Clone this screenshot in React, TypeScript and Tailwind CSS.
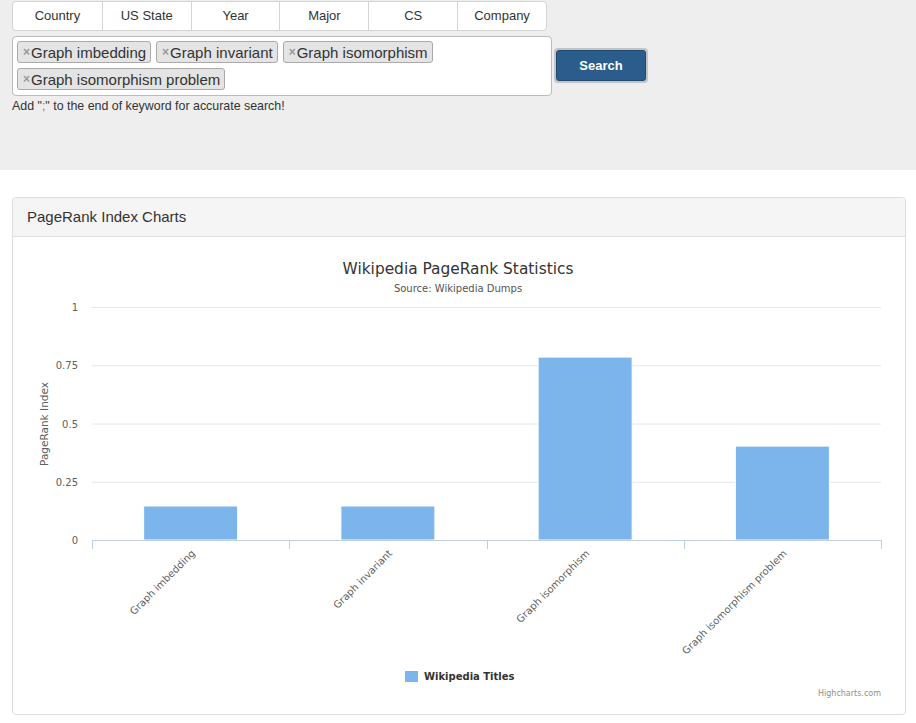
const tabs = ["Country", "US State", "Year", "Major", "CS", "Company"];
const tags = ["Graph imbedding", "Graph invariant", "Graph isomorphism", "Graph isomorphism problem"];

const bars = [
  { label: "Graph imbedding", value: 0.146 },
  { label: "Graph invariant", value: 0.146 },
  { label: "Graph isomorphism", value: 0.785 },
  { label: "Graph isomorphism problem", value: 0.403 },
];

const plotLeft = 79;
const plotRight = 868;
const plotTop = 70;
const plotBottom = 303;
const chartFont = "'DejaVu Sans', Verdana, sans-serif";

function Chart() {
  const plotH = plotBottom - plotTop;
  const catW = (plotRight - plotLeft) / bars.length;
  const ticks = [1, 0.75, 0.5, 0.25, 0];

  return (
    <svg width="891" height="477" className="block" style={{ fontFamily: chartFont }}>
      <text x="445" y="37" textAnchor="middle" fontSize="15.4" fill="#333">
        Wikipedia PageRank Statistics
      </text>
      <text x="445" y="55" textAnchor="middle" fontSize="10" fill="#555">
        Source: Wikipedia Dumps
      </text>

      {ticks.map((t) => {
        const y = plotBottom - t * plotH;
        return (
          <g key={t}>
            {t !== 0 && <line x1={plotLeft} x2={plotRight} y1={y + 0.5} y2={y + 0.5} stroke="#e6e6e6" />}
            <text x="65" y={y + 4} textAnchor="end" fontSize="10" fill="#606060">
              {t}
            </text>
          </g>
        );
      })}

      <text
        x="35"
        y="187"
        textAnchor="middle"
        fontSize="10.5"
        fill="#606060"
        transform="rotate(-90 35 187)"
      >
        PageRank Index
      </text>

      {bars.map((b, i) => {
        const h = b.value * plotH;
        const x = plotLeft + i * catW + (catW - 94) / 2;
        return (
          <rect key={b.label} x={x} y={plotBottom - h} width="94" height={h} fill="#7cb5ec" stroke="#fff" strokeWidth="1" />
        );
      })}

      <line x1={plotLeft} x2={plotRight} y1={plotBottom + 0.5} y2={plotBottom + 0.5} stroke="#c0d0e0" />
      {[0, 1, 2, 3, 4].map((i) => {
        const x = Math.round(plotLeft + i * catW) + 0.5;
        return <line key={i} x1={x} x2={x} y1={plotBottom} y2={plotBottom + 9} stroke="#c0d0e0" />;
      })}

      {bars.map((b, i) => {
        const cx = plotLeft + i * catW + catW / 2 + 5;
        const cy = 317;
        return (
          <text
            key={b.label}
            x={cx}
            y={cy}
            textAnchor="end"
            fontSize="10"
            fill="#606060"
            transform={`rotate(-45 ${cx} ${cy})`}
          >
            {b.label}
          </text>
        );
      })}

      <rect x="392" y="434" width="13" height="11" fill="#7cb5ec" />
      <text x="411" y="443" fontSize="10" fontWeight="bold" fill="#333">
        Wikipedia Titles
      </text>

      <text x="868" y="459" textAnchor="end" fontSize="8" fill="#909090">
        Highcharts.com
      </text>
    </svg>
  );
}

export default function App() {
  return (
    <div className="min-h-[723px] bg-white font-['Liberation_Sans',Arial,sans-serif] text-[#333]">
      <div className="h-[170px] bg-[#eeeeee] pl-[12px] pt-[1px]">
        <div className="flex w-[535px] rounded-[4px] border border-[#d4d4d4] bg-white">
          {tabs.map((t, i) => (
            <div
              key={t}
              className={`flex h-[28px] w-[89px] items-center justify-center text-[13px] text-[#333] ${
                i > 0 ? "border-l border-[#d4d4d4]" : ""
              }`}
            >
              {t}
            </div>
          ))}
        </div>

        <div className="mt-[5px] flex items-start">
          <div className="flex h-[60px] w-[540px] flex-wrap content-start gap-x-[5px] gap-y-[5px] rounded-[4px] border border-[#bbb] bg-white px-[4px] pt-[4px]">
            {tags.map((t) => (
              <div
                key={t}
                className="flex h-[22px] items-center rounded-[3px] border border-[#aaa] bg-[#e4e4e4] pl-[5px] pr-[4px] text-[15px] leading-none text-[#333]"
              >
                <span className="mr-[1px] text-[12px] font-bold text-[#999]">×</span>
                {t}
              </div>
            ))}
          </div>
          <div className="ml-[2px] mt-[12px] rounded-[4px] bg-[#c4c4c4] p-[2px]">
            <button className="flex h-[31px] w-[90px] items-center justify-center rounded-[3px] border border-[#1f4a72] bg-[#2a5d8c] text-[13px] font-bold text-white">
              Search
            </button>
          </div>
        </div>

        <p className="mt-[1px] text-[12.4px] text-[#333]">
          Add "<span className="text-[#c0632a]">;</span>" to the end of keyword for accurate search!
        </p>
      </div>

      <div className="ml-[12px] mt-[27px] w-[894px] rounded-[4px] border border-[#dddddd] bg-white">
        <div className="flex h-[39px] items-center rounded-t-[4px] border-b border-[#dddddd] bg-[#f5f5f5] px-[14px] text-[15px] text-[#333]">
          PageRank Index Charts
        </div>
        <Chart />
      </div>
    </div>
  );
}
